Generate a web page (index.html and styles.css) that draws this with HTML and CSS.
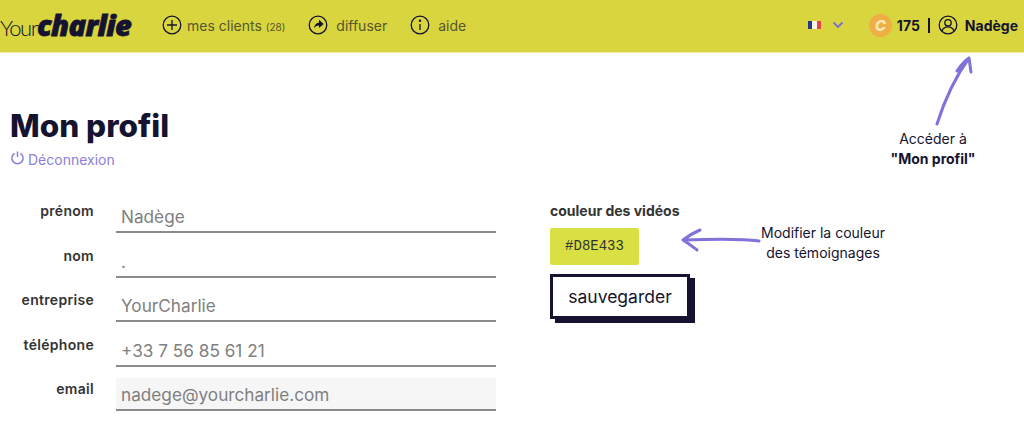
FILE: index.html
```html
<!DOCTYPE html>
<html>
<head>
    <title>Mon profil</title>
    <link rel="stylesheet" href="styles.css">
</head>
<body>
    <header class="topbar">
        <a class="logo"><span class="logo-your">Your</span><span class="logo-charlie">charlie</span></a>
        <nav class="menu">
            <a class="menu-item menu-item-clients">
                <svg class="menu-icon" viewBox="0 0 20 20"><circle cx="10" cy="10" r="8.8"/><path d="M10 5v10M5 10h10"/></svg>
                <span>mes clients <small>(28)</small></span>
            </a>
            <a class="menu-item">
                <svg class="menu-icon" viewBox="0 0 20 20"><circle cx="10" cy="10" r="8.8"/><path class="fill" d="M11 4.8l4.6 4.2-4.6 4v-2.4c-2.4 0-3.8.8-5 2.8.3-3.4 2-5.600 5-6z"/></svg>
                <span>diffuser</span>
            </a>
            <a class="menu-item">
                <svg class="menu-icon" viewBox="0 0 20 20"><circle cx="10" cy="10" r="8.8"/><path d="M10 9v6"/><circle class="fill" cx="10" cy="5.800" r="1.200"/></svg>
                <span>aide</span>
            </a>
        </nav>
        <div class="account">
            <span class="flag"><i class="blue"></i><i class="white"></i><i class="red"></i></span>
            <svg class="chevron" viewBox="0 0 12 8"><path d="M1.500 1.500L6 6l4.500-4.500"/></svg>
            <span class="coin">C</span>
            <strong class="credits">175</strong>
            <span class="sep"></span>
            <svg class="user-icon" viewBox="0 0 20 20"><circle cx="10" cy="10" r="8.800"/><circle cx="10" cy="7.800" r="3.200"/><path d="M4 16c1-3 3-4.200 6-4.200s5 1.200 6 4.200"/></svg>
            <strong class="user-name">Nadège</strong>
        </div>
    </header>

    <main class="page">
        <h1>Mon profil</h1>
        <a class="logout">
            <svg viewBox="0 0 16 16"><path d="M5 3.500a6 6 0 1 0 6 0M8 1.500v6"/></svg>
            Déconnexion
        </a>

        <div class="columns">
            <form class="profile-form">
                <label>prénom</label><input type="text" value="Nadège">
                <label>nom</label><input type="text" value=".">
                <label>entreprise</label><input type="text" value="YourCharlie">
                <label>téléphone</label><input type="text" value="+33 7 56 85 61 21">
                <label>email</label><input class="locked" type="text" value="nadege@yourcharlie.com" readonly>
            </form>
            <div class="video-color">
                <div class="color-title">couleur des vidéos</div>
                <div class="color-swatch">#D8E433</div>
                <button class="save-btn" type="button">sauvegarder</button>
            </div>
        </div>
    </main>

    <!-- annotations posées sur la capture -->
    <svg class="arrow arrow-profil" viewBox="0 0 50 76"><path d="M5 70C12 48 24 22 37 4M25 17C29 11 33 7 37 4C38 9 38 13 39 18"/></svg>
    <div class="note note-profil">Accéder à<br><b>"Mon profil"</b></div>
    <svg class="arrow arrow-color" viewBox="0 0 84 30"><path d="M80 16C60 13 30 14 4 15M21 5C14 8 9 11 4 15C9 18 14 22 18 25"/></svg>
    <div class="note note-color">Modifier la couleur<br>des témoignages</div>
</body>
</html>
```
FILE: styles.css
```css
body {
    margin: 0;
    background-color: #fff;
    color: #15132f;
    font-family: Inter, "Liberation Sans", sans-serif;
    height: 431px;
    overflow: hidden;
    position: relative;
}

.topbar {
    display: flex;
    align-items: center;
    height: 52px;
    background-color: #d8d53f;
    border-bottom: 1px solid #eeeca0;
}

.logo {
    width: 162px;
    white-space: nowrap;
    margin-top: -4px;
}

.logo-your {
    font-family: Lato, sans-serif;
    font-weight: 300;
    font-size: 22px;
    letter-spacing: -1.5px;
}

.logo-charlie {
    font-family: "Open Sans", sans-serif;
    font-weight: 800;
    font-style: italic;
    font-size: 29px;
    letter-spacing: -0.6px;
    -webkit-text-stroke: 0.8px #15132f;
}

.menu {
    display: flex;
    gap: 23px;
}

.menu-item {
    display: flex;
    align-items: center;
    gap: 8px;
    margin-top: -2px;
    font-size: 14px;
    color: #57562c;
}

.menu-item-clients {
    gap: 5px;
}

.menu-item small {
    font-size: 10px;
}

.menu-icon,
.user-icon {
    width: 20px;
    height: 20px;
    fill: none;
    stroke: #15132f;
    stroke-width: 1.3;
}

.menu-icon .fill {
    fill: #15132f;
    stroke: none;
}

.account {
    display: flex;
    align-items: center;
    margin-left: auto;
    margin-top: -2px;
    padding-right: 6px;
    font-size: 14px;
}

.flag {
    display: flex;
    width: 13px;
    height: 8px;
    margin-right: 11px;
}

.flag i {
    flex: 1;
}

.flag .blue { background-color: #2b3a7a; }
.flag .white { background-color: #f4f4f0; }
.flag .red { background-color: #e8453c; }

.chevron {
    width: 12px;
    height: 8px;
    fill: none;
    stroke: #7a6fd0;
    stroke-width: 1.8;
    margin-right: 25px;
}

.coin {
    width: 23px;
    height: 23px;
    border-radius: 50%;
    background-color: #eeb044;
    color: #fbe8b8;
    font-size: 15px;
    font-weight: 800;
    font-style: italic;
    text-align: center;
    line-height: 23px;
    margin-right: 5px;
}

.sep {
    width: 2px;
    height: 15px;
    background-color: #15132f;
    margin: 0 8px;
}

.user-icon {
    margin-right: 7px;
}

.page {
    padding: 55px 0 0 10px;
}

h1 {
    margin: 0;
    font-size: 31.500px;
    line-height: 36px;
    font-weight: 800;
}

.logout {
    display: flex;
    align-items: center;
    gap: 3px;
    margin-top: 7px;
    font-size: 14px;
    color: #8c80d8;
}

.logout svg {
    width: 15px;
    height: 15px;
    fill: none;
    stroke: #8c80d8;
    stroke-width: 1.6;
    margin-top: -4px;
}

.columns {
    display: flex;
    margin-top: 32px;
}

.profile-form {
    display: grid;
    grid-template-columns: 84px 380px;
    grid-auto-rows: 33px;
    row-gap: 11.500px;
    column-gap: 22px;
    width: 540px;
}

.profile-form label {
    text-align: right;
    font-size: 14px;
    letter-spacing: 0.3px;
    font-weight: 600;
    color: #333;
    padding-top: 2px;
}

.profile-form input {
    min-width: 0;
    border: none;
    border-bottom: 2px solid #8b8b8b;
    padding: 2px 0 0 5px;
    font-family: Inter, "Liberation Sans", sans-serif;
    font-size: 17.200px;
    color: #808080;
    background: none;
    outline: none;
}

.profile-form input.locked {
    background-color: #f6f6f6;
}

.color-title {
    font-size: 14px;
    font-weight: 700;
    color: #333;
    margin-top: 2px;
}

.color-swatch {
    width: 89px;
    height: 37px;
    margin-top: 9px;
    border-radius: 2px;
    background-color: #d8e043;
    font-family: "Liberation Mono", monospace;
    font-size: 14px;
    line-height: 37px;
    text-align: center;
    color: #333;
}

.save-btn {
    display: block;
    width: 140px;
    height: 45px;
    margin-top: 9px;
    padding: 0;
    background-color: #fff;
    border: 3px solid #15132f;
    box-shadow: 5px 4px 0 #15132f;
    font-family: Inter, "Liberation Sans", sans-serif;
    font-size: 17.500px;
    color: #15132f;
}

.arrow {
    position: absolute;
    fill: none;
    stroke: #7f72d8;
    stroke-width: 3;
    stroke-linecap: round;
    stroke-linejoin: round;
}

.arrow-profil {
    left: 932px;
    top: 54px;
    width: 50px;
    height: 76px;
}

.arrow-color {
    left: 679px;
    top: 225px;
    width: 84px;
    height: 30px;
}

.note {
    position: absolute;
    text-align: center;
    font-size: 14px;
    line-height: 20px;
    color: #15132f;
}

.note-profil {
    left: 880px;
    top: 129px;
    width: 106px;
}

.note-color {
    left: 750px;
    top: 223px;
    width: 146px;
}
```
